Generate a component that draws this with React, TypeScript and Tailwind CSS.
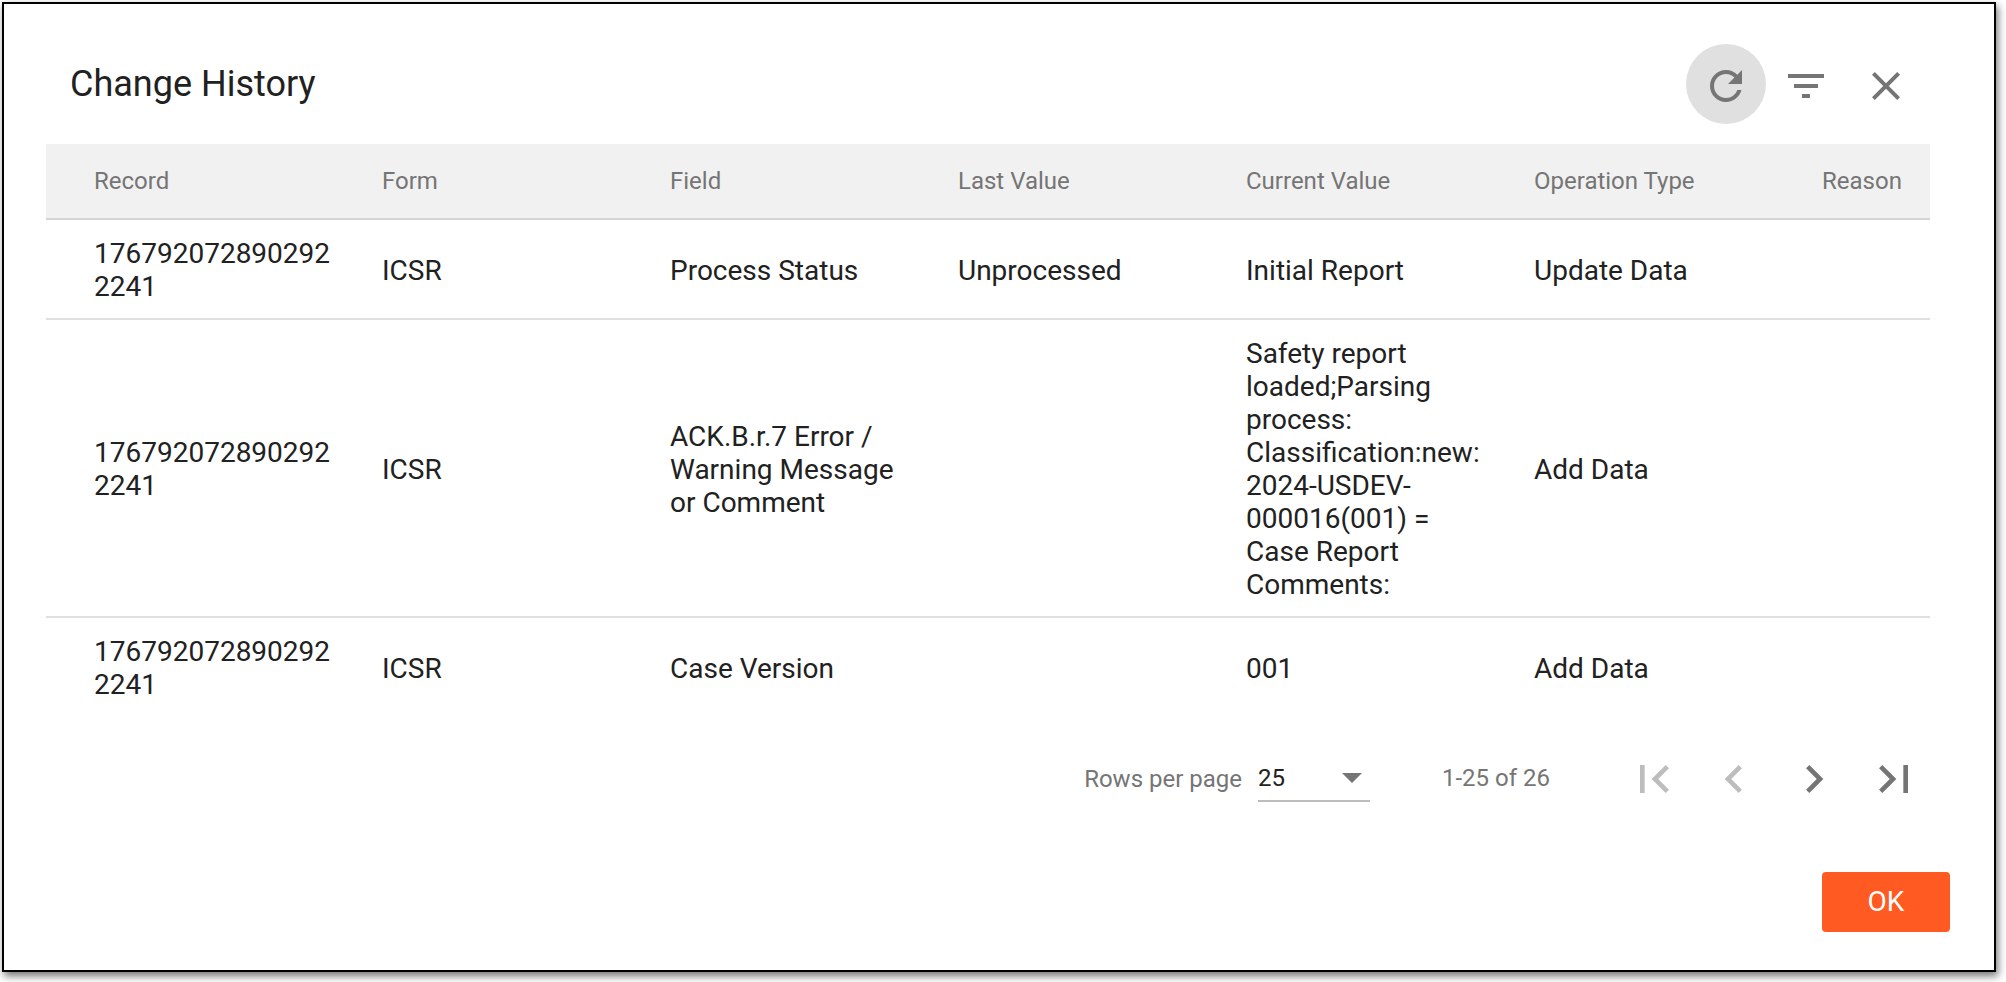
import React from 'react';

const rows = [
  { record: '1767920728902922241', form: 'ICSR', field: 'Process Status', last: 'Unprocessed', current: 'Initial Report', op: 'Update Data' },
  {
    record: '1767920728902922241',
    form: 'ICSR',
    field: 'ACK.B.r.7 Error / Warning Message or Comment',
    last: '',
    current: 'Safety report loaded;Parsing process: Classification:new: 2024-USDEV-000016(001) = Case Report Comments:',
    op: 'Add Data',
  },
  { record: '1767920728902922241', form: 'ICSR', field: 'Case Version', last: '', current: '001', op: 'Add Data' },
];

const columns = ['Record', 'Form', 'Field', 'Last Value', 'Current Value', 'Operation Type', 'Reason'];

function Icon({ d, className }: { d: string; className: string }) {
  return (
    <svg viewBox="0 0 24 24" className={className} fill="currentColor">
      <path d={d} />
    </svg>
  );
}

export default function App() {
  return (
    <div className="w-[2006px] h-[982px] bg-white pl-[2px] pt-[2px] overflow-hidden" style={{ fontFamily: 'Roboto, sans-serif' }}>
      <div className="w-[1994px] h-[970px] bg-white border-2 border-black shadow-[2px_4px_8px_rgba(0,0,0,0.55)] flex flex-col">
        <div className="h-[140px] pt-[40px] pr-[68px] pl-[66px] flex justify-between shrink-0">
          <h1 className="text-[36px] leading-[80px] text-[#212121] font-normal">Change History</h1>
          <div className="flex">
            <button className="w-20 h-20 pt-1 rounded-full bg-[#e0e0e0] text-[#757575] flex items-center justify-center">
              <Icon className="w-12 h-12" d="M17.65 6.35C16.2 4.9 14.21 4 12 4c-4.42 0-7.99 3.58-7.99 8s3.57 8 7.99 8c3.73 0 6.84-2.55 7.73-6h-2.08c-.82 2.33-3.04 4-5.65 4-3.31 0-6-2.69-6-6s2.69-6 6-6c1.66 0 3.14.69 4.22 1.78L13 11h7V4l-2.35 2.35z" />
            </button>
            <button className="w-20 h-20 pt-1 text-[#757575] flex items-center justify-center">
              <Icon className="w-12 h-12" d="M10 18h4v-2h-4v2zM3 6v2h18V6H3zm3 7h12v-2H6v2z" />
            </button>
            <button className="w-20 h-20 pt-1 text-[#757575] flex items-center justify-center">
              <Icon className="w-12 h-12" d="M19 6.41L17.59 5 12 10.59 6.41 5 5 6.41 10.59 12 5 17.59 6.41 19 12 13.41 17.59 19 19 17.59 13.41 12z" />
            </button>
          </div>
        </div>

        <div className="ml-[42px] w-[1884px] shrink-0">
          <div className="grid grid-cols-[288px_288px_288px_288px_288px_288px_1fr] h-[76px] items-center bg-[#f1f1f1] border-b-2 border-[#d4d4d4] text-[24px] text-[#757575]">
            {columns.map((c) => (
              <div key={c} className="pl-[48px] whitespace-nowrap">{c}</div>
            ))}
          </div>
          {rows.map((r, i) => (
            <div
              key={i}
              className={`grid grid-cols-[288px_288px_288px_288px_288px_288px_1fr] items-center pt-[17px] pb-[15px] text-[28px] leading-[33px] text-[#212121] ${i < 2 ? 'border-b-2 border-[#e0e0e0]' : ''}`}
            >
              <div className="pl-[48px] break-all">{r.record}</div>
              <div className="pl-[48px]">{r.form}</div>
              <div className="pl-[48px]">{r.field}</div>
              <div className="pl-[48px]">{r.last}</div>
              <div className="pl-[48px]">{r.current}</div>
              <div className="pl-[48px]">{r.op}</div>
              <div />
            </div>
          ))}
        </div>

        <div className="flex-1 flex flex-col items-end">
          <div className="mt-[23px] h-20 pr-[60px] flex items-center">
            <span className="text-[24px] text-[#757575]">Rows per page</span>
            <div className="ml-[16px] w-[112px] h-[46px] border-b-2 border-[#bdbdbd] flex items-center justify-between pr-[8px] text-[24px] text-[#212121]">
              <span>25</span>
              <svg viewBox="0 0 20 10" className="w-[20px] h-[10px]" fill="#757575"><path d="M0 0h20L10 10z" /></svg>
            </div>
            <span className="ml-[72px] w-[172px] text-[24px] text-[#757575] -mt-[2px]">1-25 of 26</span>
            <button className="w-20 h-20 text-[#bdbdbd] flex items-center justify-center">
              <Icon className="w-14 h-14" d="M18.41 16.59L13.82 12l4.59-4.59L17 6l-6 6 6 6zM6 6h2v12H6z" />
            </button>
            <button className="w-20 h-20 text-[#bdbdbd] flex items-center justify-center">
              <Icon className="w-14 h-14" d="M15.41 7.41L14 6l-6 6 6 6 1.41-1.41L10.83 12z" />
            </button>
            <button className="w-20 h-20 text-[#757575] flex items-center justify-center">
              <Icon className="w-14 h-14" d="M10 6L8.59 7.41 13.17 12l-4.58 4.59L10 18l6-6z" />
            </button>
            <button className="w-20 h-20 text-[#757575] flex items-center justify-center">
              <Icon className="w-14 h-14" d="M5.59 7.41L10.18 12l-4.59 4.59L7 18l6-6-6-6zM16 6h2v12h-2z" />
            </button>
          </div>
          <button className="mt-[53px] mr-[44px] w-[128px] h-[60px] rounded-[4px] bg-[#ff5a22] text-white text-[28px] font-normal">OK</button>
        </div>
      </div>
    </div>
  );
}
